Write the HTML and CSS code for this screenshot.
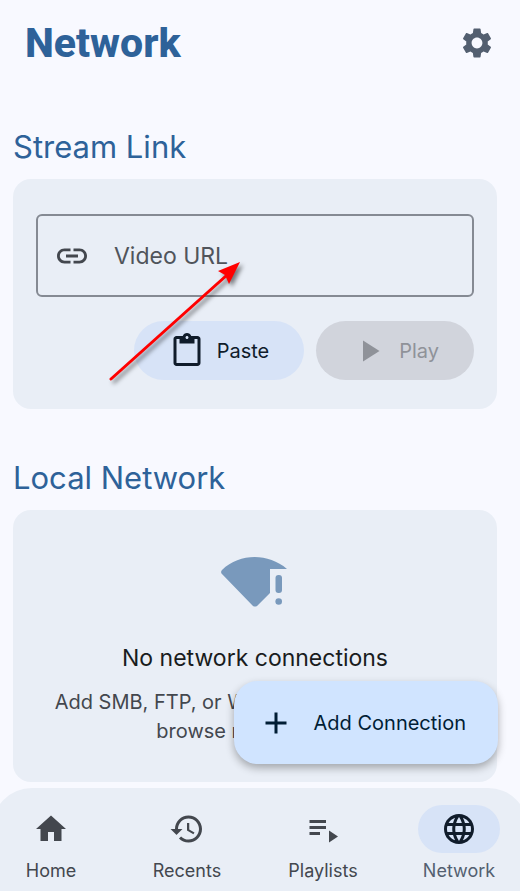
FILE: index.html
```
<!DOCTYPE html>
<html lang="en">
<head>
    <meta charset="UTF-8">
    <meta name="viewport" content="width=device-width, initial-scale=1.0">
    <title>Network</title>
    <link rel="stylesheet" href="styles.css">
</head>
<body>
    <div id="app">
        <header>
            <h1>Network</h1>
            <button id="settings-btn" aria-label="Settings">
                <svg class="icon" viewBox="0 0 24 24"><path d="M19.14 12.94c.04-.3.06-.61.06-.94 0-.32-.02-.64-.07-.94l2.03-1.58c.18-.14.23-.41.12-.61l-1.92-3.32c-.12-.22-.37-.29-.59-.22l-2.39.96c-.5-.38-1.03-.7-1.62-.94l-.36-2.54c-.04-.24-.24-.41-.48-.41h-3.84c-.24 0-.43.17-.47.41l-.36 2.54c-.59.24-1.13.57-1.62.94l-2.39-.96c-.22-.08-.47 0-.59.22L2.74 8.87c-.12.21-.08.47.12.61l2.03 1.58c-.05.3-.09.63-.09.94s.02.64.07.94l-2.03 1.58c-.18.14-.23.41-.12.61l1.92 3.32c.12.22.37.29.59.22l2.39-.96c.5.38 1.03.7 1.62.94l.36 2.54c.05.24.24.41.48.41h3.84c.24 0 .44-.17.47-.41l.36-2.54c.59-.24 1.13-.56 1.62-.94l2.39.96c.22.08.47 0 .59-.22l1.92-3.32c.12-.22.07-.47-.12-.61l-2.01-1.58zM12 15.6c-1.98 0-3.6-1.62-3.6-3.6s1.62-3.6 3.6-3.6 3.6 1.62 3.6 3.6-1.62 3.6-3.6 3.6z"/></svg>
            </button>
        </header>

        <main>
            <h2>Stream Link</h2>
            <section id="stream-card" class="card">
                <label id="url-field">
                    <svg class="icon" viewBox="0 0 24 24"><path d="M3.9 12c0-1.71 1.39-3.1 3.1-3.1h4V7H7c-2.76 0-5 2.24-5 5s2.24 5 5 5h4v-1.9H7c-1.71 0-3.1-1.39-3.1-3.1zM8 13h8v-2H8v2zm9-6h-4v1.9h4c1.71 0 3.1 1.39 3.1 3.1s-1.39 3.1-3.1 3.1h-4V17h4c2.76 0 5-2.24 5-5s-2.24-5-5-5z"/></svg>
                    <input type="url" id="url-input" placeholder="Video URL" aria-label="Video URL">
                </label>
                <div id="button-container">
                    <button id="paste-btn">
                        <svg class="icon" viewBox="0 0 24 24"><path d="M19 2h-4.18C14.4.84 13.3 0 12 0c-1.3 0-2.4.84-2.82 2H5c-1.1 0-2 .9-2 2v16c0 1.1.9 2 2 2h14c1.1 0 2-.9 2-2V4c0-1.1-.9-2-2-2zm-7 0c.55 0 1 .45 1 1s-.45 1-1 1-1-.45-1-1 .45-1 1-1zm7 18H5V4h2v3h10V4h2v16z"/></svg>
                        Paste
                    </button>
                    <button id="play-btn" disabled>
                        <svg class="icon" viewBox="0 0 24 24"><path d="M8 5v14l11-7z"/></svg>
                        Play
                    </button>
                </div>
                <svg id="pointer-arrow" viewBox="0 0 140 130">
                    <path d="M6 121L122 17" stroke="#f00" stroke-width="3" stroke-linecap="round"/>
                    <path d="M135 4L124 26L120 17L113 13z" fill="#f00"/>
                </svg>
            </section>

            <h2>Local Network</h2>
            <section id="local-card" class="card">
                <svg id="wifi-icon" viewBox="0 0 70 52">
                    <path d="M2 14C20-3 48-3 67 13H50V37L37 50Q35 51 33 50L1.5 17.5Q.5 15.5 2 14z"/>
                    <rect x="55.5" y="19" width="6.5" height="18" rx="3"/>
                    <circle cx="58.7" cy="45.5" r="3.3"/>
                </svg>
                <h3>No network connections</h3>
                <p>Add SMB, FTP, or WebDAV connections to<br>browse network files</p>
            </section>
        </main>

        <button id="add-btn">
            <svg class="icon" viewBox="0 0 24 24"><path d="M19 13h-6v6h-2v-6H5v-2h6V5h2v6h6v2z"/></svg>
            Add Connection
        </button>

        <nav>
            <a href="#home">
                <span class="nav-icon"><svg class="icon" viewBox="0 0 24 24"><path d="M10 20v-6h4v6h5v-8h3L12 3 2 12h3v8z"/></svg></span>
                Home
            </a>
            <a href="#recents">
                <span class="nav-icon"><svg class="icon" viewBox="0 0 24 24"><path d="M13 3c-4.97 0-9 4.03-9 9H1l3.89 3.89.07.14L9 12H6c0-3.87 3.13-7 7-7s7 3.13 7 7-3.13 7-7 7c-1.93 0-3.68-.79-4.94-2.06l-1.42 1.42C8.27 19.99 10.51 21 13 21c4.97 0 9-4.03 9-9s-4.03-9-9-9zm-1 5v5l4.28 2.54.72-1.21-3.5-2.08V8H12z"/></svg></span>
                Recents
            </a>
            <a href="#playlists">
                <span class="nav-icon"><svg class="icon" viewBox="0 0 24 24"><path d="M3 6h11v2H3zM3 10h11v2H3zM3 14h7v2H3zM16 13v8l6-4z"/></svg></span>
                Playlists
            </a>
            <a href="#network" class="active">
                <span class="nav-icon"><svg class="icon" viewBox="0 0 24 24"><path d="M11.99 2C6.47 2 2 6.48 2 12s4.47 10 9.99 10C17.52 22 22 17.52 22 12S17.52 2 11.99 2zm6.93 6h-2.95c-.32-1.25-.78-2.45-1.38-3.56 1.84.63 3.37 1.91 4.33 3.56zM12 4.04c.83 1.2 1.48 2.53 1.91 3.96h-3.82c.43-1.43 1.08-2.76 1.91-3.96zM4.26 14C4.1 13.36 4 12.69 4 12s.1-1.36.26-2h3.38c-.08.66-.14 1.32-.14 2 0 .68.06 1.34.14 2H4.26zm.82 2h2.95c.32 1.25.78 2.45 1.38 3.56-1.84-.63-3.37-1.9-4.33-3.56zm2.95-8H5.08c.96-1.66 2.49-2.93 4.33-3.56C8.81 5.55 8.35 6.75 8.03 8zM12 19.96c-.83-1.2-1.48-2.53-1.91-3.96h3.82c-.43 1.43-1.08 2.76-1.91 3.96zM14.34 14H9.66c-.09-.66-.16-1.32-.16-2 0-.68.07-1.35.16-2h4.68c.09.65.16 1.32.16 2 0 .68-.07 1.34-.16 2zm.25 5.56c.6-1.11 1.06-2.31 1.38-3.56h2.95c-.96 1.65-2.49 2.93-4.33 3.56zM16.36 14c.08-.66.14-1.32.14-2 0-.68-.06-1.34-.14-2h3.38c.16.64.26 1.31.26 2s-.1 1.36-.26 2h-3.38z"/></svg></span>
                Network
            </a>
        </nav>
    </div>
</body>
</html>
```
FILE: styles.css
```
* {
    box-sizing: border-box;
}

body, html {
    margin: 0;
    padding: 0;
    font-family: Inter, Roboto, sans-serif;
    background-color: #f8f9ff;
    color: #43474e;
}

button, input {
    font-family: inherit;
    border: none;
    background: none;
    color: inherit;
}

button {
    cursor: pointer;
}

#app {
    position: relative;
    display: flex;
    flex-direction: column;
    height: 100vh;
    overflow: hidden;
}

.icon {
    display: block;
    flex: none;
    width: 36px;
    height: 36px;
    fill: currentColor;
}

header {
    display: flex;
    align-items: center;
    justify-content: space-between;
    height: 86px;
    padding: 0 25px;
}

h1 {
    margin: 0;
    font-family: Roboto, sans-serif;
    font-size: 41px;
    font-weight: 800;
    color: #2e6299;
}

#settings-btn {
    padding: 0;
    color: #535f70;
}

main {
    flex: 1;
    min-height: 0;
    padding: 41px 23px 0 13px;
}

h2 {
    margin: 0 0 12px;
    font-size: 31px;
    font-weight: 400;
    line-height: 40px;
    color: #2e6299;
}

.card {
    position: relative;
    border-radius: 18px;
    background-color: #e9eef6;
}

#stream-card {
    margin-bottom: 49px;
    padding: 35px 23px 29px;
}

#url-field {
    display: flex;
    align-items: center;
    gap: 24px;
    height: 83px;
    padding: 0 16px;
    border: 2px solid #858a93;
    border-radius: 6px;
}

#url-input {
    flex: 1;
    min-width: 0;
    padding: 0;
    font-size: 23px;
    outline: none;
}

#url-input::placeholder {
    color: #50545b;
    opacity: 1;
}

#button-container {
    display: flex;
    justify-content: flex-end;
    gap: 12px;
    margin-top: 24px;
}

#button-container button {
    display: flex;
    align-items: center;
    gap: 12px;
    height: 59px;
    padding: 0 35px;
    border-radius: 30px;
    font-size: 20px;
}

#paste-btn {
    background-color: #d7e3f7;
    color: #101c2b;
}

#play-btn {
    background-color: #d1d4dc;
    color: #8f9299;
}

#pointer-arrow {
    position: absolute;
    left: 92px;
    top: 79px;
    width: 140px;
    height: 130px;
    fill: none;
    filter: drop-shadow(3px 3px 2px rgba(0, 0, 0, 0.5));
    pointer-events: none;
}

#local-card {
    padding: 46px 24px 36px;
    text-align: center;
}

#wifi-icon {
    display: block;
    width: 70px;
    height: 52px;
    margin: 0 auto 28px;
    fill: #7999bc;
}

h3 {
    margin: 0 0 8px;
    font-size: 23px;
    font-weight: 400;
    line-height: 44px;
    color: #191c20;
}

#local-card p {
    margin: 0 -8px;
    font-size: 20px;
    line-height: 29px;
}

#add-btn {
    position: absolute;
    right: 22px;
    bottom: 127px;
    display: flex;
    align-items: center;
    gap: 20px;
    height: 83px;
    padding: 0 32px 0 24px;
    border-radius: 24px;
    background-color: #d0e4ff;
    color: #001d35;
    font-size: 20px;
    box-shadow: 0 4px 8px rgba(0, 0, 0, 0.3);
}

/* bar runs past both screen edges */
nav {
    display: flex;
    justify-content: space-between;
    height: 103px;
    margin: 0 -8px;
    padding: 17px 28px 0 18px;
    border-radius: 40px 40px 0 0;
    background-color: #e9eef6;
}

nav a {
    display: flex;
    flex-direction: column;
    align-items: center;
    gap: 6px;
    width: 82px;
    font-size: 18px;
    line-height: 24px;
    color: #43474e;
    text-decoration: none;
}

.nav-icon {
    display: flex;
    align-items: center;
    justify-content: center;
    width: 82px;
    height: 48px;
    border-radius: 24px;
}

nav a.active {
    color: #535f70;
}

.active .nav-icon {
    background-color: #d7e3f7;
    color: #101c2b;
}
```
